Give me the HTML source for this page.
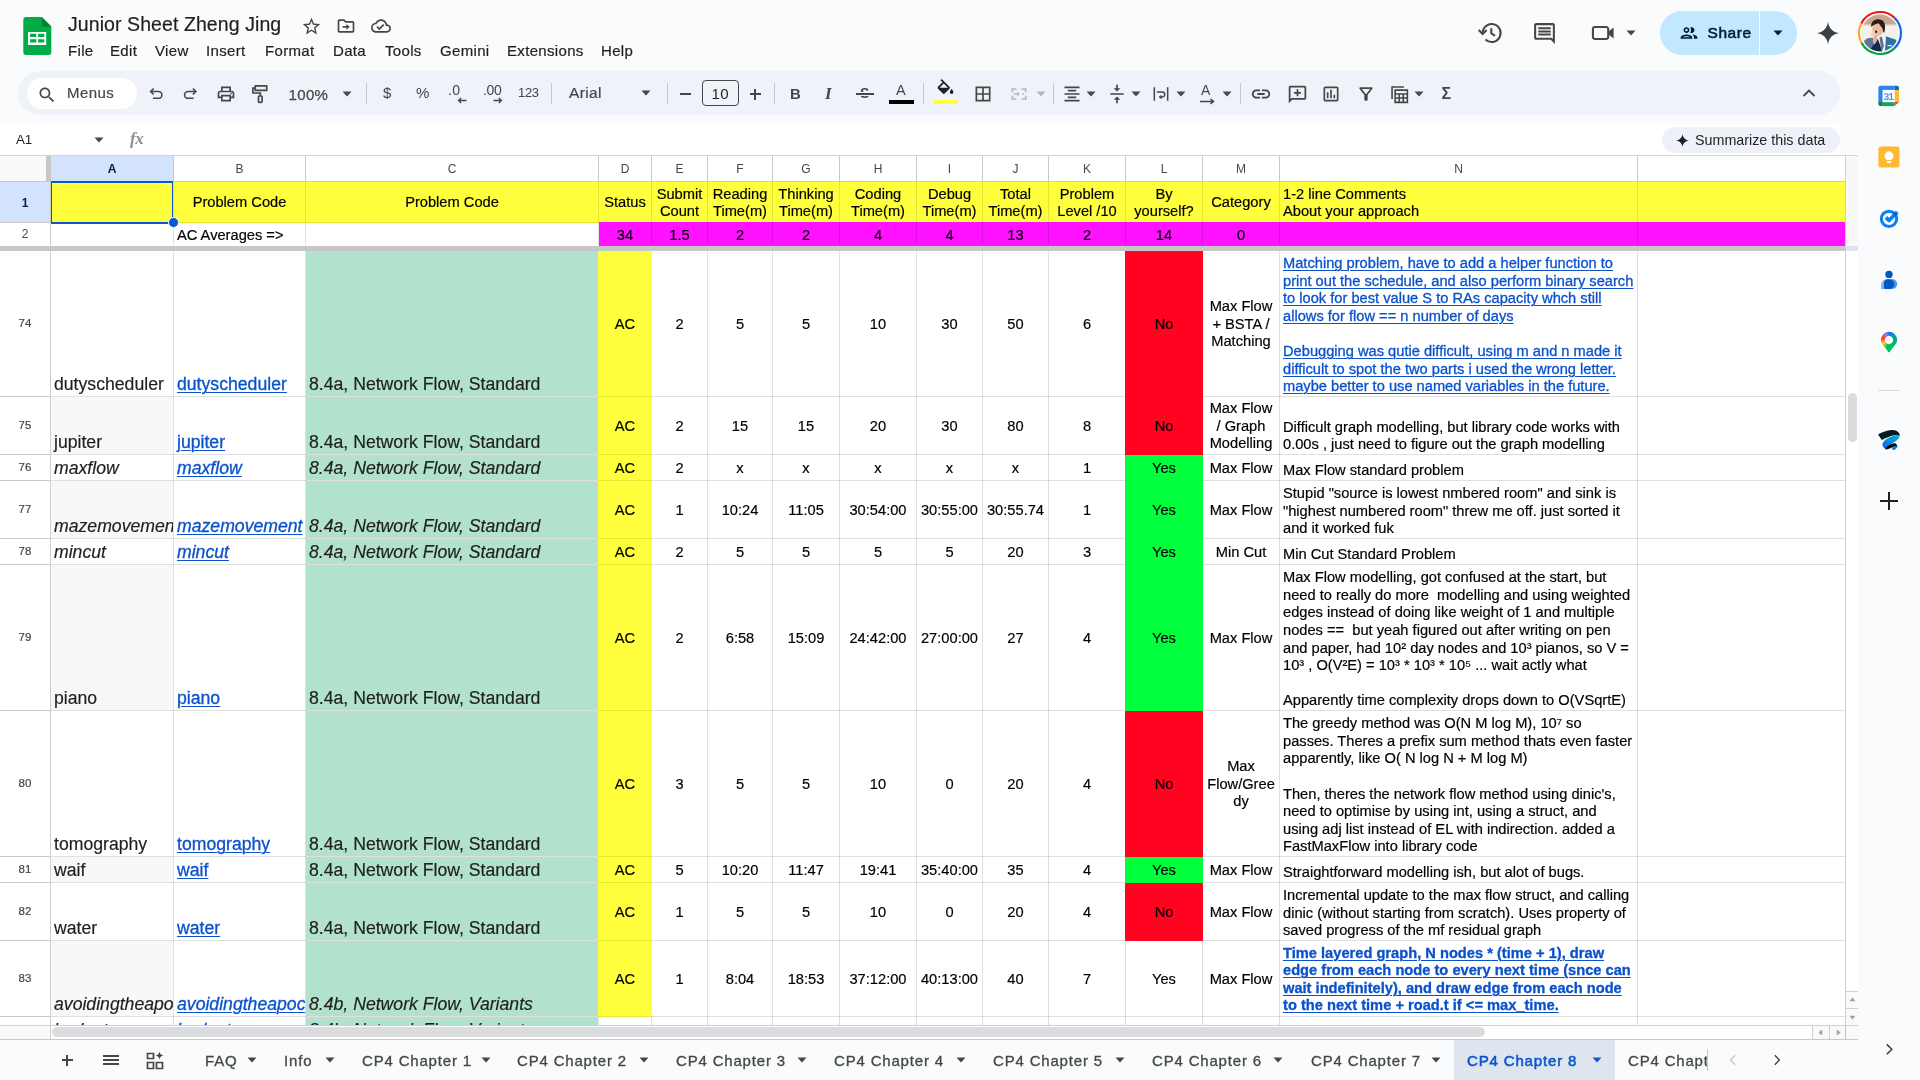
<!DOCTYPE html>
<html><head><meta charset="utf-8"><title>Junior Sheet Zheng Jing - Google Sheets</title>
<style>
*{box-sizing:border-box;margin:0;padding:0}
html,body{width:1920px;height:1080px;overflow:hidden;background:#f9fbfd;font-family:"Liberation Sans",sans-serif;color:#1f1f1f}
.abs,#grid div,#top div,#top svg,#side div,#side svg,#bot div,#bot svg{position:absolute}
#grid{position:absolute;left:0;top:0;width:1858px;height:1040px;overflow:hidden}
#gridbg{left:0;top:155px;width:1846px;height:869px;background:#fff}
.rh{left:0;width:50px;text-align:center;font-size:11.5px;padding-top:1px;-webkit-text-stroke:.2px #444746;color:#444746;background:#fff}
.c{overflow:hidden;background:#fff;color:#000}
.c .t{position:absolute;left:0;right:0;white-space:nowrap}
.bt .t{bottom:2px;left:3px;font-size:17.65px;line-height:20px;color:#1f1f1f}
.it .t{font-style:italic}
.lk a,.cm a{color:#0a52cc;-webkit-text-stroke:.3px #0a52cc;text-decoration:underline;text-decoration-thickness:1.250px;text-underline-offset:1.500px}
.c .t,.h1 span,.h2 span{-webkit-text-stroke:.18px currentColor}
#grid,#frozen,#top,#side,#bot{will-change:transform}
.mid{display:flex;align-items:center;justify-content:center}
.mid .t{position:static!important;text-align:center;font-size:14.67px;line-height:17.5px;padding-top:2px}
.cm .t{bottom:0px;left:3px;font-size:14.67px;line-height:17.6px;white-space:nowrap}
.cm a.b{font-weight:bold}
.cm.r83 .t{bottom:1px}
.c.x{z-index:2}
.hl{left:0;width:1846px;height:1px;background:rgba(0,0,0,.12)}
.vl{width:1px;background:rgba(0,0,0,.12)}
sup{font-size:9px}

.fz{position:absolute}
.ch{text-align:center;font-size:12px;line-height:27px;color:#444746;background:#fff}
.ch.sel{background:#d3e3fd;color:#041e49;font-weight:bold}
.rh2{text-align:center;font-size:12px;color:#444746;background:#fff}
.rh2.sel{background:#d3e3fd;color:#041e49;font-weight:bold}
.h1{display:flex;align-items:center;font-size:14.67px;line-height:17px;color:#000}
.h2{display:flex;align-items:center;font-size:14.67px;line-height:17px;color:#000;padding-top:2px}

.tx{position:absolute;white-space:nowrap}

.tab{position:absolute;white-space:nowrap;font-size:15px;line-height:24px;color:#444746;letter-spacing:.82px;-webkit-text-stroke:.3px #444746}
.tab.act{color:#0b57d0;font-weight:normal;-webkit-text-stroke:.55px #0b57d0;letter-spacing:.85px}
</style></head><body>
<div id="gridbg" class="abs"></div>
<!-- GRID -->
<div id="grid">
<div class="rh" style="top:251px;height:145px;line-height:143px">74</div>
<div class="c bt big" style="left:51px;top:251px;width:122px;height:145px;"><div class="t">dutyscheduler</div></div>
<div class="c bt big lk" style="left:174px;top:251px;width:131px;height:145px;"><div class="t"><a>dutyscheduler</a></div></div>
<div class="c bt big" style="left:306px;top:251px;width:292px;height:145px;background:#b2e1cd;"><div class="t">8.4a, Network Flow, Standard</div></div>
<div class="c x mid" style="left:598px;top:251px;width:54px;height:146px;background:#ffff3d;"><div class="t">AC</div></div>
<div class="c mid" style="left:652px;top:251px;width:55px;height:145px;"><div class="t">2</div></div>
<div class="c mid" style="left:708px;top:251px;width:64px;height:145px;"><div class="t">5</div></div>
<div class="c mid" style="left:773px;top:251px;width:66px;height:145px;"><div class="t">5</div></div>
<div class="c mid" style="left:840px;top:251px;width:76px;height:145px;"><div class="t">10</div></div>
<div class="c mid" style="left:917px;top:251px;width:65px;height:145px;"><div class="t">30</div></div>
<div class="c mid" style="left:983px;top:251px;width:65px;height:145px;"><div class="t">50</div></div>
<div class="c mid" style="left:1049px;top:251px;width:76px;height:145px;"><div class="t">6</div></div>
<div class="c x mid" style="left:1125px;top:251px;width:78px;height:146px;background:#ff0320;"><div class="t">No</div></div>
<div class="c mid" style="left:1203px;top:251px;width:76px;height:145px;"><div class="t">Max Flow<br>+ BSTA /<br>Matching</div></div>
<div class="c cm" style="left:1280px;top:251px;width:357px;height:145px;"><div class="t"><a>Matching problem, have to add a helper function to<br>print out the schedule, and also perform binary search<br>to look for best value S to RAs capacity whch still<br>allows for flow == n number of days</a><br><br><a>Debugging was qutie difficult, using m and n made it<br>difficult to spot the two parts i used the wrong letter.<br>maybe better to use named variables in the future.</a></div></div>
<div class="c mid" style="left:1638px;top:251px;width:207px;height:145px;"><div class="t"></div></div>
<div class="hl" style="top:396px"></div>
<div class="hl" style="top:396px;width:50px;background:rgba(0,0,0,.1)"></div>
<div class="hl" style="top:396px;left:598px;width:54px;z-index:3;background:rgba(0,0,0,.09)"></div>
<div class="rh" style="top:397px;height:57px;line-height:55px">75</div>
<div class="c bt big" style="left:51px;top:397px;width:122px;height:57px;background:#f8f8f8;"><div class="t">jupiter</div></div>
<div class="c bt big lk" style="left:174px;top:397px;width:131px;height:57px;"><div class="t"><a>jupiter</a></div></div>
<div class="c bt big" style="left:306px;top:397px;width:292px;height:57px;background:#b2e1cd;"><div class="t">8.4a, Network Flow, Standard</div></div>
<div class="c x mid" style="left:598px;top:397px;width:54px;height:58px;background:#ffff3d;"><div class="t">AC</div></div>
<div class="c mid" style="left:652px;top:397px;width:55px;height:57px;"><div class="t">2</div></div>
<div class="c mid" style="left:708px;top:397px;width:64px;height:57px;"><div class="t">15</div></div>
<div class="c mid" style="left:773px;top:397px;width:66px;height:57px;"><div class="t">15</div></div>
<div class="c mid" style="left:840px;top:397px;width:76px;height:57px;"><div class="t">20</div></div>
<div class="c mid" style="left:917px;top:397px;width:65px;height:57px;"><div class="t">30</div></div>
<div class="c mid" style="left:983px;top:397px;width:65px;height:57px;"><div class="t">80</div></div>
<div class="c mid" style="left:1049px;top:397px;width:76px;height:57px;"><div class="t">8</div></div>
<div class="c x mid" style="left:1125px;top:397px;width:78px;height:58px;background:#ff0320;"><div class="t">No</div></div>
<div class="c mid" style="left:1203px;top:397px;width:76px;height:57px;"><div class="t">Max Flow<br>/ Graph<br>Modelling</div></div>
<div class="c cm" style="left:1280px;top:397px;width:357px;height:57px;"><div class="t">Difficult graph modelling, but library code works with<br>0.00s , just need to figure out the graph modelling</div></div>
<div class="c mid" style="left:1638px;top:397px;width:207px;height:57px;"><div class="t"></div></div>
<div class="hl" style="top:454px"></div>
<div class="hl" style="top:454px;width:50px;background:rgba(0,0,0,.1)"></div>
<div class="hl" style="top:454px;left:598px;width:54px;z-index:3;background:rgba(0,0,0,.09)"></div>
<div class="rh" style="top:455px;height:25px;line-height:23px">76</div>
<div class="c bt big it" style="left:51px;top:455px;width:122px;height:25px;"><div class="t">maxflow</div></div>
<div class="c bt big lk it" style="left:174px;top:455px;width:131px;height:25px;"><div class="t"><a>maxflow</a></div></div>
<div class="c bt big it" style="left:306px;top:455px;width:292px;height:25px;background:#b2e1cd;"><div class="t">8.4a, Network Flow, Standard</div></div>
<div class="c x mid" style="left:598px;top:455px;width:54px;height:26px;background:#ffff3d;"><div class="t">AC</div></div>
<div class="c mid" style="left:652px;top:455px;width:55px;height:25px;"><div class="t">2</div></div>
<div class="c mid" style="left:708px;top:455px;width:64px;height:25px;"><div class="t">x</div></div>
<div class="c mid" style="left:773px;top:455px;width:66px;height:25px;"><div class="t">x</div></div>
<div class="c mid" style="left:840px;top:455px;width:76px;height:25px;"><div class="t">x</div></div>
<div class="c mid" style="left:917px;top:455px;width:65px;height:25px;"><div class="t">x</div></div>
<div class="c mid" style="left:983px;top:455px;width:65px;height:25px;"><div class="t">x</div></div>
<div class="c mid" style="left:1049px;top:455px;width:76px;height:25px;"><div class="t">1</div></div>
<div class="c x mid" style="left:1125px;top:455px;width:78px;height:26px;background:#00ff3c;"><div class="t">Yes</div></div>
<div class="c mid" style="left:1203px;top:455px;width:76px;height:25px;"><div class="t">Max Flow</div></div>
<div class="c cm" style="left:1280px;top:455px;width:357px;height:25px;"><div class="t">Max Flow standard problem</div></div>
<div class="c mid" style="left:1638px;top:455px;width:207px;height:25px;"><div class="t"></div></div>
<div class="hl" style="top:480px"></div>
<div class="hl" style="top:480px;width:50px;background:rgba(0,0,0,.1)"></div>
<div class="hl" style="top:480px;left:598px;width:54px;z-index:3;background:rgba(0,0,0,.09)"></div>
<div class="rh" style="top:481px;height:57px;line-height:55px">77</div>
<div class="c bt big it" style="left:51px;top:481px;width:122px;height:57px;background:#f8f8f8;"><div class="t">mazemovement</div></div>
<div class="c bt big lk it" style="left:174px;top:481px;width:131px;height:57px;"><div class="t"><a>mazemovement</a></div></div>
<div class="c bt big it" style="left:306px;top:481px;width:292px;height:57px;background:#b2e1cd;"><div class="t">8.4a, Network Flow, Standard</div></div>
<div class="c x mid" style="left:598px;top:481px;width:54px;height:58px;background:#ffff3d;"><div class="t">AC</div></div>
<div class="c mid" style="left:652px;top:481px;width:55px;height:57px;"><div class="t">1</div></div>
<div class="c mid" style="left:708px;top:481px;width:64px;height:57px;"><div class="t">10:24</div></div>
<div class="c mid" style="left:773px;top:481px;width:66px;height:57px;"><div class="t">11:05</div></div>
<div class="c mid" style="left:840px;top:481px;width:76px;height:57px;"><div class="t">30:54:00</div></div>
<div class="c mid" style="left:917px;top:481px;width:65px;height:57px;"><div class="t">30:55:00</div></div>
<div class="c mid" style="left:983px;top:481px;width:65px;height:57px;"><div class="t">30:55.74</div></div>
<div class="c mid" style="left:1049px;top:481px;width:76px;height:57px;"><div class="t">1</div></div>
<div class="c x mid" style="left:1125px;top:481px;width:78px;height:58px;background:#00ff3c;"><div class="t">Yes</div></div>
<div class="c mid" style="left:1203px;top:481px;width:76px;height:57px;"><div class="t">Max Flow</div></div>
<div class="c cm" style="left:1280px;top:481px;width:357px;height:57px;"><div class="t">Stupid "source is lowest nmbered room" and sink is<br>"highest numbered room" threw me off. just sorted it<br>and it worked fuk</div></div>
<div class="c mid" style="left:1638px;top:481px;width:207px;height:57px;"><div class="t"></div></div>
<div class="hl" style="top:538px"></div>
<div class="hl" style="top:538px;width:50px;background:rgba(0,0,0,.1)"></div>
<div class="hl" style="top:538px;left:598px;width:54px;z-index:3;background:rgba(0,0,0,.09)"></div>
<div class="rh" style="top:539px;height:25px;line-height:23px">78</div>
<div class="c bt big it" style="left:51px;top:539px;width:122px;height:25px;"><div class="t">mincut</div></div>
<div class="c bt big lk it" style="left:174px;top:539px;width:131px;height:25px;"><div class="t"><a>mincut</a></div></div>
<div class="c bt big it" style="left:306px;top:539px;width:292px;height:25px;background:#b2e1cd;"><div class="t">8.4a, Network Flow, Standard</div></div>
<div class="c x mid" style="left:598px;top:539px;width:54px;height:26px;background:#ffff3d;"><div class="t">AC</div></div>
<div class="c mid" style="left:652px;top:539px;width:55px;height:25px;"><div class="t">2</div></div>
<div class="c mid" style="left:708px;top:539px;width:64px;height:25px;"><div class="t">5</div></div>
<div class="c mid" style="left:773px;top:539px;width:66px;height:25px;"><div class="t">5</div></div>
<div class="c mid" style="left:840px;top:539px;width:76px;height:25px;"><div class="t">5</div></div>
<div class="c mid" style="left:917px;top:539px;width:65px;height:25px;"><div class="t">5</div></div>
<div class="c mid" style="left:983px;top:539px;width:65px;height:25px;"><div class="t">20</div></div>
<div class="c mid" style="left:1049px;top:539px;width:76px;height:25px;"><div class="t">3</div></div>
<div class="c x mid" style="left:1125px;top:539px;width:78px;height:26px;background:#00ff3c;"><div class="t">Yes</div></div>
<div class="c mid" style="left:1203px;top:539px;width:76px;height:25px;"><div class="t">Min Cut</div></div>
<div class="c cm" style="left:1280px;top:539px;width:357px;height:25px;"><div class="t">Min Cut Standard Problem</div></div>
<div class="c mid" style="left:1638px;top:539px;width:207px;height:25px;"><div class="t"></div></div>
<div class="hl" style="top:564px"></div>
<div class="hl" style="top:564px;width:50px;background:rgba(0,0,0,.1)"></div>
<div class="hl" style="top:564px;left:598px;width:54px;z-index:3;background:rgba(0,0,0,.09)"></div>
<div class="rh" style="top:565px;height:145px;line-height:143px">79</div>
<div class="c bt big" style="left:51px;top:565px;width:122px;height:145px;background:#f8f8f8;"><div class="t">piano</div></div>
<div class="c bt big lk" style="left:174px;top:565px;width:131px;height:145px;"><div class="t"><a>piano</a></div></div>
<div class="c bt big" style="left:306px;top:565px;width:292px;height:145px;background:#b2e1cd;"><div class="t">8.4a, Network Flow, Standard</div></div>
<div class="c x mid" style="left:598px;top:565px;width:54px;height:146px;background:#ffff3d;"><div class="t">AC</div></div>
<div class="c mid" style="left:652px;top:565px;width:55px;height:145px;"><div class="t">2</div></div>
<div class="c mid" style="left:708px;top:565px;width:64px;height:145px;"><div class="t">6:58</div></div>
<div class="c mid" style="left:773px;top:565px;width:66px;height:145px;"><div class="t">15:09</div></div>
<div class="c mid" style="left:840px;top:565px;width:76px;height:145px;"><div class="t">24:42:00</div></div>
<div class="c mid" style="left:917px;top:565px;width:65px;height:145px;"><div class="t">27:00:00</div></div>
<div class="c mid" style="left:983px;top:565px;width:65px;height:145px;"><div class="t">27</div></div>
<div class="c mid" style="left:1049px;top:565px;width:76px;height:145px;"><div class="t">4</div></div>
<div class="c x mid" style="left:1125px;top:565px;width:78px;height:146px;background:#00ff3c;"><div class="t">Yes</div></div>
<div class="c mid" style="left:1203px;top:565px;width:76px;height:145px;"><div class="t">Max Flow</div></div>
<div class="c cm" style="left:1280px;top:565px;width:357px;height:145px;"><div class="t">Max Flow modelling, got confused at the start, but<br>need to really do more&nbsp; modelling and using weighted<br>edges instead of doing like weight of 1 and multiple<br>nodes ==&nbsp; but yeah figured out after writing on pen<br>and paper, had 10² day nodes and 10³ pianos, so V =<br>10³ , O(V²E) = 10³ * 10³ * 10⁵ ... wait actly what<br><br>Apparently time complexity drops down to O(VSqrtE)</div></div>
<div class="c mid" style="left:1638px;top:565px;width:207px;height:145px;"><div class="t"></div></div>
<div class="hl" style="top:710px"></div>
<div class="hl" style="top:710px;width:50px;background:rgba(0,0,0,.1)"></div>
<div class="hl" style="top:710px;left:598px;width:54px;z-index:3;background:rgba(0,0,0,.09)"></div>
<div class="rh" style="top:711px;height:145px;line-height:143px">80</div>
<div class="c bt big" style="left:51px;top:711px;width:122px;height:145px;"><div class="t">tomography</div></div>
<div class="c bt big lk" style="left:174px;top:711px;width:131px;height:145px;"><div class="t"><a>tomography</a></div></div>
<div class="c bt big" style="left:306px;top:711px;width:292px;height:145px;background:#b2e1cd;"><div class="t">8.4a, Network Flow, Standard</div></div>
<div class="c x mid" style="left:598px;top:711px;width:54px;height:146px;background:#ffff3d;"><div class="t">AC</div></div>
<div class="c mid" style="left:652px;top:711px;width:55px;height:145px;"><div class="t">3</div></div>
<div class="c mid" style="left:708px;top:711px;width:64px;height:145px;"><div class="t">5</div></div>
<div class="c mid" style="left:773px;top:711px;width:66px;height:145px;"><div class="t">5</div></div>
<div class="c mid" style="left:840px;top:711px;width:76px;height:145px;"><div class="t">10</div></div>
<div class="c mid" style="left:917px;top:711px;width:65px;height:145px;"><div class="t">0</div></div>
<div class="c mid" style="left:983px;top:711px;width:65px;height:145px;"><div class="t">20</div></div>
<div class="c mid" style="left:1049px;top:711px;width:76px;height:145px;"><div class="t">4</div></div>
<div class="c x mid" style="left:1125px;top:711px;width:78px;height:146px;background:#ff0320;"><div class="t">No</div></div>
<div class="c mid" style="left:1203px;top:711px;width:76px;height:145px;"><div class="t">Max<br>Flow/Gree<br>dy</div></div>
<div class="c cm" style="left:1280px;top:711px;width:357px;height:145px;"><div class="t">The greedy method was O(N M log M), 10⁷ so<br>passes. Theres a prefix sum method thats even faster<br>apparently, like O( N log N + M log M)<br><br>Then, theres the network flow method using dinic's,<br>need to optimise by using int, using a struct, and<br>using adj list instead of EL with indirection. added a<br>FastMaxFlow into library code</div></div>
<div class="c mid" style="left:1638px;top:711px;width:207px;height:145px;"><div class="t"></div></div>
<div class="hl" style="top:856px"></div>
<div class="hl" style="top:856px;width:50px;background:rgba(0,0,0,.1)"></div>
<div class="hl" style="top:856px;left:598px;width:54px;z-index:3;background:rgba(0,0,0,.09)"></div>
<div class="rh" style="top:857px;height:25px;line-height:23px">81</div>
<div class="c bt big" style="left:51px;top:857px;width:122px;height:25px;background:#f8f8f8;"><div class="t">waif</div></div>
<div class="c bt big lk" style="left:174px;top:857px;width:131px;height:25px;"><div class="t"><a>waif</a></div></div>
<div class="c bt big" style="left:306px;top:857px;width:292px;height:25px;background:#b2e1cd;"><div class="t">8.4a, Network Flow, Standard</div></div>
<div class="c x mid" style="left:598px;top:857px;width:54px;height:26px;background:#ffff3d;"><div class="t">AC</div></div>
<div class="c mid" style="left:652px;top:857px;width:55px;height:25px;"><div class="t">5</div></div>
<div class="c mid" style="left:708px;top:857px;width:64px;height:25px;"><div class="t">10:20</div></div>
<div class="c mid" style="left:773px;top:857px;width:66px;height:25px;"><div class="t">11:47</div></div>
<div class="c mid" style="left:840px;top:857px;width:76px;height:25px;"><div class="t">19:41</div></div>
<div class="c mid" style="left:917px;top:857px;width:65px;height:25px;"><div class="t">35:40:00</div></div>
<div class="c mid" style="left:983px;top:857px;width:65px;height:25px;"><div class="t">35</div></div>
<div class="c mid" style="left:1049px;top:857px;width:76px;height:25px;"><div class="t">4</div></div>
<div class="c x mid" style="left:1125px;top:857px;width:78px;height:26px;background:#00ff3c;"><div class="t">Yes</div></div>
<div class="c mid" style="left:1203px;top:857px;width:76px;height:25px;"><div class="t">Max Flow</div></div>
<div class="c cm" style="left:1280px;top:857px;width:357px;height:25px;"><div class="t">Straightforward modelling ish, but alot of bugs.</div></div>
<div class="c mid" style="left:1638px;top:857px;width:207px;height:25px;"><div class="t"></div></div>
<div class="hl" style="top:882px"></div>
<div class="hl" style="top:882px;width:50px;background:rgba(0,0,0,.1)"></div>
<div class="hl" style="top:882px;left:598px;width:54px;z-index:3;background:rgba(0,0,0,.09)"></div>
<div class="rh" style="top:883px;height:57px;line-height:55px">82</div>
<div class="c bt big" style="left:51px;top:883px;width:122px;height:57px;"><div class="t">water</div></div>
<div class="c bt big lk" style="left:174px;top:883px;width:131px;height:57px;"><div class="t"><a>water</a></div></div>
<div class="c bt big" style="left:306px;top:883px;width:292px;height:57px;background:#b2e1cd;"><div class="t">8.4a, Network Flow, Standard</div></div>
<div class="c x mid" style="left:598px;top:883px;width:54px;height:58px;background:#ffff3d;"><div class="t">AC</div></div>
<div class="c mid" style="left:652px;top:883px;width:55px;height:57px;"><div class="t">1</div></div>
<div class="c mid" style="left:708px;top:883px;width:64px;height:57px;"><div class="t">5</div></div>
<div class="c mid" style="left:773px;top:883px;width:66px;height:57px;"><div class="t">5</div></div>
<div class="c mid" style="left:840px;top:883px;width:76px;height:57px;"><div class="t">10</div></div>
<div class="c mid" style="left:917px;top:883px;width:65px;height:57px;"><div class="t">0</div></div>
<div class="c mid" style="left:983px;top:883px;width:65px;height:57px;"><div class="t">20</div></div>
<div class="c mid" style="left:1049px;top:883px;width:76px;height:57px;"><div class="t">4</div></div>
<div class="c x mid" style="left:1125px;top:883px;width:78px;height:58px;background:#ff0320;"><div class="t">No</div></div>
<div class="c mid" style="left:1203px;top:883px;width:76px;height:57px;"><div class="t">Max Flow</div></div>
<div class="c cm" style="left:1280px;top:883px;width:357px;height:57px;"><div class="t">Incremental update to the max flow struct, and calling<br>dinic (without starting from scratch). Uses property of<br>saved progress of the mf residual graph</div></div>
<div class="c mid" style="left:1638px;top:883px;width:207px;height:57px;"><div class="t"></div></div>
<div class="hl" style="top:940px"></div>
<div class="hl" style="top:940px;width:50px;background:rgba(0,0,0,.1)"></div>
<div class="hl" style="top:940px;left:598px;width:54px;z-index:3;background:rgba(0,0,0,.09)"></div>
<div class="rh" style="top:941px;height:75px;line-height:73px">83</div>
<div class="c bt big it" style="left:51px;top:941px;width:122px;height:75px;background:#f8f8f8;"><div class="t">avoidingtheapocalypse</div></div>
<div class="c bt big lk it" style="left:174px;top:941px;width:131px;height:75px;"><div class="t"><a>avoidingtheapocalypse</a></div></div>
<div class="c bt big it" style="left:306px;top:941px;width:292px;height:75px;background:#b2e1cd;"><div class="t">8.4b, Network Flow, Variants</div></div>
<div class="c x mid" style="left:598px;top:941px;width:54px;height:76px;background:#ffff3d;"><div class="t">AC</div></div>
<div class="c mid" style="left:652px;top:941px;width:55px;height:75px;"><div class="t">1</div></div>
<div class="c mid" style="left:708px;top:941px;width:64px;height:75px;"><div class="t">8:04</div></div>
<div class="c mid" style="left:773px;top:941px;width:66px;height:75px;"><div class="t">18:53</div></div>
<div class="c mid" style="left:840px;top:941px;width:76px;height:75px;"><div class="t">37:12:00</div></div>
<div class="c mid" style="left:917px;top:941px;width:65px;height:75px;"><div class="t">40:13:00</div></div>
<div class="c mid" style="left:983px;top:941px;width:65px;height:75px;"><div class="t">40</div></div>
<div class="c mid" style="left:1049px;top:941px;width:76px;height:75px;"><div class="t">7</div></div>
<div class="c mid" style="left:1126px;top:941px;width:76px;height:75px;"><div class="t">Yes</div></div>
<div class="c mid" style="left:1203px;top:941px;width:76px;height:75px;"><div class="t">Max Flow</div></div>
<div class="c cm r83" style="left:1280px;top:941px;width:357px;height:75px;"><div class="t"><a class="b">Time layered graph, N nodes * (time + 1), draw<br>edge from each node to every next time (snce can<br>wait indefinitely), and draw edge from each node<br>to the next time + road.t if &lt;= max_time.</a></div></div>
<div class="c mid" style="left:1638px;top:941px;width:207px;height:75px;"><div class="t"></div></div>
<div class="hl" style="top:1016px"></div>
<div class="hl" style="top:1016px;width:50px;background:rgba(0,0,0,.1)"></div>
<div class="hl" style="top:1016px;left:598px;width:54px;z-index:3;background:rgba(0,0,0,.09)"></div>
<div class="rh" style="top:1017px;height:25px;line-height:23px">84</div>
<div class="c bt big it" style="left:51px;top:1017px;width:122px;height:25px;"><div class="t">budget</div></div>
<div class="c bt big lk it" style="left:174px;top:1017px;width:131px;height:25px;"><div class="t"><a>budget</a></div></div>
<div class="c bt big it" style="left:306px;top:1017px;width:292px;height:25px;background:#b2e1cd;"><div class="t">8.4b, Network Flow, Variants</div></div>
<div class="c mid" style="left:599px;top:1017px;width:52px;height:25px;"><div class="t"></div></div>
<div class="c mid" style="left:652px;top:1017px;width:55px;height:25px;"><div class="t"></div></div>
<div class="c mid" style="left:708px;top:1017px;width:64px;height:25px;"><div class="t"></div></div>
<div class="c mid" style="left:773px;top:1017px;width:66px;height:25px;"><div class="t"></div></div>
<div class="c mid" style="left:840px;top:1017px;width:76px;height:25px;"><div class="t"></div></div>
<div class="c mid" style="left:917px;top:1017px;width:65px;height:25px;"><div class="t"></div></div>
<div class="c mid" style="left:983px;top:1017px;width:65px;height:25px;"><div class="t"></div></div>
<div class="c mid" style="left:1049px;top:1017px;width:76px;height:25px;"><div class="t"></div></div>
<div class="c mid" style="left:1126px;top:1017px;width:76px;height:25px;"><div class="t"></div></div>
<div class="c mid" style="left:1203px;top:1017px;width:76px;height:25px;"><div class="t"></div></div>
<div class="c cm" style="left:1280px;top:1017px;width:357px;height:25px;"><div class="t"></div></div>
<div class="c mid" style="left:1638px;top:1017px;width:207px;height:25px;"><div class="t"></div></div>
<div class="hl" style="top:1042px"></div>
<div class="hl" style="top:1042px;width:50px;background:rgba(0,0,0,.1)"></div>
<div class="vl" style="left:50px;top:251px;height:780px;background:#cfcfcf"></div>
<div class="vl" style="left:173px;top:251px;height:780px"></div>
<div class="vl" style="left:305px;top:251px;height:780px"></div>
<div class="vl" style="left:598px;top:251px;height:780px"></div>
<div class="vl" style="left:651px;top:251px;height:780px"></div>
<div class="vl" style="left:707px;top:251px;height:780px"></div>
<div class="vl" style="left:772px;top:251px;height:780px"></div>
<div class="vl" style="left:839px;top:251px;height:780px"></div>
<div class="vl" style="left:916px;top:251px;height:780px"></div>
<div class="vl" style="left:982px;top:251px;height:780px"></div>
<div class="vl" style="left:1048px;top:251px;height:780px"></div>
<div class="vl" style="left:1125px;top:251px;height:780px"></div>
<div class="vl" style="left:1202px;top:251px;height:780px"></div>
<div class="vl" style="left:1279px;top:251px;height:780px"></div>
<div class="vl" style="left:1637px;top:251px;height:780px"></div>
<div class="vl" style="left:1845px;top:251px;height:780px"></div>
</div><!-- FROZEN HEADER -->
<div id="frozen" class="abs" style="left:0;top:155px;width:1846px;height:96px">
<div class="fz" style="left:0;top:0;width:1846px;height:96px;background:#fff"></div>
<div class="fz" style="left:0;top:0;width:1846px;height:1px;background:#d5d5d5"></div>
<div class="fz" style="left:0;top:1px;width:46px;height:25px;background:#f8f9fa"></div>
<div class="fz ch sel" style="left:51px;top:1px;width:122px;height:25px">A</div>
<div class="fz" style="left:173px;top:1px;width:1px;height:25px;background:#c9c9c9"></div>
<div class="fz ch" style="left:174px;top:1px;width:131px;height:25px">B</div>
<div class="fz" style="left:305px;top:1px;width:1px;height:25px;background:#c9c9c9"></div>
<div class="fz ch" style="left:306px;top:1px;width:292px;height:25px">C</div>
<div class="fz" style="left:598px;top:1px;width:1px;height:25px;background:#c9c9c9"></div>
<div class="fz ch" style="left:599px;top:1px;width:52px;height:25px">D</div>
<div class="fz" style="left:651px;top:1px;width:1px;height:25px;background:#c9c9c9"></div>
<div class="fz ch" style="left:652px;top:1px;width:55px;height:25px">E</div>
<div class="fz" style="left:707px;top:1px;width:1px;height:25px;background:#c9c9c9"></div>
<div class="fz ch" style="left:708px;top:1px;width:64px;height:25px">F</div>
<div class="fz" style="left:772px;top:1px;width:1px;height:25px;background:#c9c9c9"></div>
<div class="fz ch" style="left:773px;top:1px;width:66px;height:25px">G</div>
<div class="fz" style="left:839px;top:1px;width:1px;height:25px;background:#c9c9c9"></div>
<div class="fz ch" style="left:840px;top:1px;width:76px;height:25px">H</div>
<div class="fz" style="left:916px;top:1px;width:1px;height:25px;background:#c9c9c9"></div>
<div class="fz ch" style="left:917px;top:1px;width:65px;height:25px">I</div>
<div class="fz" style="left:982px;top:1px;width:1px;height:25px;background:#c9c9c9"></div>
<div class="fz ch" style="left:983px;top:1px;width:65px;height:25px">J</div>
<div class="fz" style="left:1048px;top:1px;width:1px;height:25px;background:#c9c9c9"></div>
<div class="fz ch" style="left:1049px;top:1px;width:76px;height:25px">K</div>
<div class="fz" style="left:1125px;top:1px;width:1px;height:25px;background:#c9c9c9"></div>
<div class="fz ch" style="left:1126px;top:1px;width:76px;height:25px">L</div>
<div class="fz" style="left:1202px;top:1px;width:1px;height:25px;background:#c9c9c9"></div>
<div class="fz ch" style="left:1203px;top:1px;width:76px;height:25px">M</div>
<div class="fz" style="left:1279px;top:1px;width:1px;height:25px;background:#c9c9c9"></div>
<div class="fz ch" style="left:1280px;top:1px;width:357px;height:25px">N</div>
<div class="fz" style="left:1637px;top:1px;width:1px;height:25px;background:#c9c9c9"></div>
<div class="fz ch" style="left:1638px;top:1px;width:207px;height:25px"></div>
<div class="fz" style="left:1845px;top:1px;width:1px;height:25px;background:#c9c9c9"></div>
<div class="fz" style="left:0;top:26px;width:1846px;height:1px;background:#c9c9c9"></div>
<div class="fz rh2 sel" style="left:0;top:27px;width:50px;height:41px;line-height:43px">1</div>
<div class="fz" style="left:0;top:67px;width:50px;height:1px;background:#c9c9c9"></div>
<div class="fz rh2" style="left:0;top:68px;width:50px;height:22px;line-height:22px">2</div>
<div class="fz" style="left:50px;top:27px;width:1px;height:63px;background:#c9c9c9"></div>
<div class="fz h1" style="left:51px;top:27px;width:123px;height:41px;background:#ffff3d;justify-content:center;text-align:center;padding-right:1px;"><span></span></div>
<div class="fz" style="left:173px;top:27px;width:1px;height:40px;background:rgba(0,0,0,.1)"></div>
<div class="fz h1" style="left:174px;top:27px;width:132px;height:41px;background:#ffff3d;justify-content:center;text-align:center;padding-right:1px;"><span>Problem Code</span></div>
<div class="fz" style="left:305px;top:27px;width:1px;height:40px;background:rgba(0,0,0,.1)"></div>
<div class="fz h1" style="left:306px;top:27px;width:293px;height:41px;background:#ffff3d;justify-content:center;text-align:center;padding-right:1px;"><span>Problem Code</span></div>
<div class="fz" style="left:598px;top:27px;width:1px;height:40px;background:rgba(0,0,0,.1)"></div>
<div class="fz h1" style="left:599px;top:27px;width:53px;height:41px;background:#ffff3d;justify-content:center;text-align:center;padding-right:1px;"><span>Status</span></div>
<div class="fz" style="left:651px;top:27px;width:1px;height:40px;background:rgba(0,0,0,.1)"></div>
<div class="fz h1" style="left:652px;top:27px;width:56px;height:41px;background:#ffff3d;justify-content:center;text-align:center;padding-right:1px;"><span>Submit<br>Count</span></div>
<div class="fz" style="left:707px;top:27px;width:1px;height:40px;background:rgba(0,0,0,.1)"></div>
<div class="fz h1" style="left:708px;top:27px;width:65px;height:41px;background:#ffff3d;justify-content:center;text-align:center;padding-right:1px;"><span>Reading<br>Time(m)</span></div>
<div class="fz" style="left:772px;top:27px;width:1px;height:40px;background:rgba(0,0,0,.1)"></div>
<div class="fz h1" style="left:773px;top:27px;width:67px;height:41px;background:#ffff3d;justify-content:center;text-align:center;padding-right:1px;"><span>Thinking<br>Time(m)</span></div>
<div class="fz" style="left:839px;top:27px;width:1px;height:40px;background:rgba(0,0,0,.1)"></div>
<div class="fz h1" style="left:840px;top:27px;width:77px;height:41px;background:#ffff3d;justify-content:center;text-align:center;padding-right:1px;"><span>Coding<br>Time(m)</span></div>
<div class="fz" style="left:916px;top:27px;width:1px;height:40px;background:rgba(0,0,0,.1)"></div>
<div class="fz h1" style="left:917px;top:27px;width:66px;height:41px;background:#ffff3d;justify-content:center;text-align:center;padding-right:1px;"><span>Debug<br>Time(m)</span></div>
<div class="fz" style="left:982px;top:27px;width:1px;height:40px;background:rgba(0,0,0,.1)"></div>
<div class="fz h1" style="left:983px;top:27px;width:66px;height:41px;background:#ffff3d;justify-content:center;text-align:center;padding-right:1px;"><span>Total<br>Time(m)</span></div>
<div class="fz" style="left:1048px;top:27px;width:1px;height:40px;background:rgba(0,0,0,.1)"></div>
<div class="fz h1" style="left:1049px;top:27px;width:77px;height:41px;background:#ffff3d;justify-content:center;text-align:center;padding-right:1px;"><span>Problem<br>Level /10</span></div>
<div class="fz" style="left:1125px;top:27px;width:1px;height:40px;background:rgba(0,0,0,.1)"></div>
<div class="fz h1" style="left:1126px;top:27px;width:77px;height:41px;background:#ffff3d;justify-content:center;text-align:center;padding-right:1px;"><span>By<br>yourself?</span></div>
<div class="fz" style="left:1202px;top:27px;width:1px;height:40px;background:rgba(0,0,0,.1)"></div>
<div class="fz h1" style="left:1203px;top:27px;width:77px;height:41px;background:#ffff3d;justify-content:center;text-align:center;padding-right:1px;"><span>Category</span></div>
<div class="fz" style="left:1279px;top:27px;width:1px;height:40px;background:rgba(0,0,0,.1)"></div>
<div class="fz h1" style="left:1280px;top:27px;width:358px;height:41px;background:#ffff3d;justify-content:flex-start;text-align:left;padding-right:1px;padding-left:3px;"><span>1-2 line Comments<br>About your approach</span></div>
<div class="fz" style="left:1637px;top:27px;width:1px;height:40px;background:rgba(0,0,0,.1)"></div>
<div class="fz h1" style="left:1638px;top:27px;width:208px;height:41px;background:#ffff3d;justify-content:center;text-align:center;padding-right:1px;"><span></span></div>
<div class="fz" style="left:51px;top:67px;width:548px;height:1px;background:rgba(0,0,0,.1)"></div>
<div class="fz h2" style="left:51px;top:68px;width:122px;height:22px;background:#fff;justify-content:center;padding-right:1px;"><span></span></div>
<div class="fz" style="left:173px;top:68px;width:1px;height:22px;background:rgba(0,0,0,.12)"></div>
<div class="fz h2" style="left:174px;top:68px;width:131px;height:22px;background:#fff;justify-content:flex-start;padding-right:1px;padding-left:3px;"><span>AC Averages =&gt;</span></div>
<div class="fz" style="left:305px;top:68px;width:1px;height:22px;background:rgba(0,0,0,.12)"></div>
<div class="fz h2" style="left:306px;top:68px;width:292px;height:22px;background:#fff;justify-content:center;padding-right:1px;"><span></span></div>
<div class="fz" style="left:598px;top:68px;width:1px;height:22px;background:rgba(0,0,0,.12)"></div>
<div class="fz h2" style="left:599px;top:67px;width:53px;height:24px;background:#ff12ff;justify-content:center;padding-right:1px;"><span>34</span></div>
<div class="fz" style="left:651px;top:68px;width:1px;height:22px;background:rgba(0,0,0,.12)"></div>
<div class="fz h2" style="left:652px;top:67px;width:56px;height:24px;background:#ff12ff;justify-content:center;padding-right:1px;"><span>1.5</span></div>
<div class="fz" style="left:707px;top:68px;width:1px;height:22px;background:rgba(0,0,0,.12)"></div>
<div class="fz h2" style="left:708px;top:67px;width:65px;height:24px;background:#ff12ff;justify-content:center;padding-right:1px;"><span>2</span></div>
<div class="fz" style="left:772px;top:68px;width:1px;height:22px;background:rgba(0,0,0,.12)"></div>
<div class="fz h2" style="left:773px;top:67px;width:67px;height:24px;background:#ff12ff;justify-content:center;padding-right:1px;"><span>2</span></div>
<div class="fz" style="left:839px;top:68px;width:1px;height:22px;background:rgba(0,0,0,.12)"></div>
<div class="fz h2" style="left:840px;top:67px;width:77px;height:24px;background:#ff12ff;justify-content:center;padding-right:1px;"><span>4</span></div>
<div class="fz" style="left:916px;top:68px;width:1px;height:22px;background:rgba(0,0,0,.12)"></div>
<div class="fz h2" style="left:917px;top:67px;width:66px;height:24px;background:#ff12ff;justify-content:center;padding-right:1px;"><span>4</span></div>
<div class="fz" style="left:982px;top:68px;width:1px;height:22px;background:rgba(0,0,0,.12)"></div>
<div class="fz h2" style="left:983px;top:67px;width:66px;height:24px;background:#ff12ff;justify-content:center;padding-right:1px;"><span>13</span></div>
<div class="fz" style="left:1048px;top:68px;width:1px;height:22px;background:rgba(0,0,0,.12)"></div>
<div class="fz h2" style="left:1049px;top:67px;width:77px;height:24px;background:#ff12ff;justify-content:center;padding-right:1px;"><span>2</span></div>
<div class="fz" style="left:1125px;top:68px;width:1px;height:22px;background:rgba(0,0,0,.12)"></div>
<div class="fz h2" style="left:1126px;top:67px;width:77px;height:24px;background:#ff12ff;justify-content:center;padding-right:1px;"><span>14</span></div>
<div class="fz" style="left:1202px;top:68px;width:1px;height:22px;background:rgba(0,0,0,.12)"></div>
<div class="fz h2" style="left:1203px;top:67px;width:77px;height:24px;background:#ff12ff;justify-content:center;padding-right:1px;"><span>0</span></div>
<div class="fz" style="left:1279px;top:68px;width:1px;height:22px;background:rgba(0,0,0,.12)"></div>
<div class="fz h2" style="left:1280px;top:67px;width:358px;height:24px;background:#ff12ff;justify-content:center;padding-right:1px;"><span></span></div>
<div class="fz" style="left:1637px;top:68px;width:1px;height:22px;background:rgba(0,0,0,.12)"></div>
<div class="fz h2" style="left:1638px;top:67px;width:208px;height:24px;background:#ff12ff;justify-content:center;padding-right:1px;"><span></span></div>
<div class="fz" style="left:0;top:90.500px;width:1846px;height:5.300px;background:#c7c7c7"></div>
<div class="fz" style="left:46px;top:1px;width:5px;height:26px;background:#c7c7c7"></div>
<div class="fz" style="left:50.700px;top:26px;width:122.600px;height:42.500px;border:2px solid #0b57d0;border-left-width:1.500px;border-right-width:1.500px"></div>
<div class="fz" style="left:168px;top:62px;width:11px;height:11px;border-radius:50%;background:#0b57d0;border:1px solid #fff"></div>
</div><!-- TOP -->
<div id="top" class="abs" style="left:0;top:0;width:1920px;height:155px">
<svg style="left:23px;top:17px" width="29" height="38" viewBox="0 0 29 38"><path d="M3.300 .100H18.700L28.300 9.500V34.900a3 3 0 0 1-3 3H3.300a3 3 0 0 1-3-3V3.100a3 3 0 0 1 3-3z" fill="#00ac47"/><path d="M18.700 .100L28.300 9.500H18.700z" fill="#00832d"/><path d="M5 15H23.200V27.900H5zM7.100 16.800V20H13.300V16.800zM15.100 16.800V20H21.300V16.800zM7.100 22.300V25.600H13.300V22.300zM15.100 22.300V25.600H21.300V22.300z" fill="#fff" fill-rule="evenodd"/></svg>
<div class="tx" style="left:68px;top:12.3px;line-height:24px;font-size:19.5px;color:#1f1f1f;font-weight:normal;letter-spacing:0.08px;-webkit-text-stroke:.2px #1f1f1f;">Junior Sheet Zheng Jing</div>
<svg style="left:300.5px;top:15.5px" width="21" height="21" viewBox="0 0 24 24" ><path d="M22 9.240l-7.190-.620L12 2 9.190 8.630 2 9.240l5.460 4.730L5.820 21 12 17.270 18.180 21l-1.630-7.030L22 9.240zM12 15.400l-3.760 2.270 1-4.280-3.320-2.880 4.380-.380L12 6.100l1.710 4.040 4.380.380-3.320 2.880 1 4.280L12 15.400z" fill="#444746" /></svg>
<svg style="left:336.0px;top:16.0px" width="20" height="20" viewBox="0 0 24 24" ><path d="M20 6h-8l-2-2H4c-1.100 0-1.990.900-1.990 2L2 18c0 1.100.900 2 2 2h16c1.100 0 2-.900 2-2V8c0-1.100-.900-2-2-2zm0 12H4V6h5.170l2 2H20v10zm-7.500-1.500l4-3.500-4-3.500v2.500H8v2h4.500v2.500z" fill="#444746" /></svg>
<svg style="left:371.0px;top:16.0px" width="20" height="20" viewBox="0 0 24 24" ><path d="M19.350 10.040C18.670 6.590 15.640 4 12 4 9.110 4 6.600 5.640 5.350 8.040 2.340 8.360 0 10.910 0 14c0 3.310 2.690 6 6 6h13c2.760 0 5-2.240 5-5 0-2.640-2.050-4.780-4.650-4.960zM19 18H6c-2.210 0-4-1.790-4-4 0-2.050 1.530-3.760 3.560-3.970l1.070-.110.500-.950C8.080 7.140 9.940 6 12 6c2.620 0 4.880 1.860 5.390 4.430l.300 1.500 1.530.110c1.560.100 2.780 1.410 2.780 2.960 0 1.650-1.350 3-3 3zm-9-3.820l-2.090-2.090L6.500 13.500 10 17l6.010-6.010-1.410-1.410z" fill="#444746" /></svg>
<div class="tx" style="left:68px;top:38.7px;line-height:24px;font-size:15px;color:#1f1f1f;font-weight:normal;letter-spacing:0.33px;-webkit-text-stroke:.2px #1f1f1f;">File</div>
<div class="tx" style="left:110px;top:38.7px;line-height:24px;font-size:15px;color:#1f1f1f;font-weight:normal;letter-spacing:0.33px;-webkit-text-stroke:.2px #1f1f1f;">Edit</div>
<div class="tx" style="left:155px;top:38.7px;line-height:24px;font-size:15px;color:#1f1f1f;font-weight:normal;letter-spacing:0.33px;-webkit-text-stroke:.2px #1f1f1f;">View</div>
<div class="tx" style="left:206px;top:38.7px;line-height:24px;font-size:15px;color:#1f1f1f;font-weight:normal;letter-spacing:0.33px;-webkit-text-stroke:.2px #1f1f1f;">Insert</div>
<div class="tx" style="left:265px;top:38.7px;line-height:24px;font-size:15px;color:#1f1f1f;font-weight:normal;letter-spacing:0.33px;-webkit-text-stroke:.2px #1f1f1f;">Format</div>
<div class="tx" style="left:333px;top:38.7px;line-height:24px;font-size:15px;color:#1f1f1f;font-weight:normal;letter-spacing:0.33px;-webkit-text-stroke:.2px #1f1f1f;">Data</div>
<div class="tx" style="left:385px;top:38.7px;line-height:24px;font-size:15px;color:#1f1f1f;font-weight:normal;letter-spacing:0.33px;-webkit-text-stroke:.2px #1f1f1f;">Tools</div>
<div class="tx" style="left:440px;top:38.7px;line-height:24px;font-size:15px;color:#1f1f1f;font-weight:normal;letter-spacing:0.33px;-webkit-text-stroke:.2px #1f1f1f;">Gemini</div>
<div class="tx" style="left:507px;top:38.7px;line-height:24px;font-size:15px;color:#1f1f1f;font-weight:normal;letter-spacing:0.33px;-webkit-text-stroke:.2px #1f1f1f;">Extensions</div>
<div class="tx" style="left:601px;top:38.7px;line-height:24px;font-size:15px;color:#1f1f1f;font-weight:normal;letter-spacing:0.33px;-webkit-text-stroke:.2px #1f1f1f;">Help</div>
<svg style="left:1477.0px;top:20.0px" width="26" height="26" viewBox="0 0 24 24" ><path d="M5.200 12.500a8.300 8.300 0 1 1 2.600 5.600" fill="none" stroke="#444746" stroke-width="1.900"/><path d="M1.600 9.300l3.600 3.700 3.700-3.700" fill="none" stroke="#444746" stroke-width="1.900"/><path d="M13.200 7.500v4.800l3.400 2.400" fill="none" stroke="#444746" stroke-width="1.900"/></svg>
<svg style="left:1531.5px;top:20.5px" width="25" height="25" viewBox="0 0 24 24" ><path d="M21.990 4c0-1.100-.890-2-1.990-2H4c-1.100 0-2 .900-2 2v12c0 1.100.900 2 2 2h14l4 4-.010-18zM20 4v13.170L18.830 16H4V4h16zM6 12h12v2H6zm0-3h12v2H6zm0-3h12v2H6z" fill="#444746" /></svg>
<svg style="left:1590.0px;top:20.0px" width="26" height="26" viewBox="0 0 24 24" ><path d="M4.500 6.500h10.500a1.800 1.800 0 0 1 1.800 1.800v7.400a1.800 1.800 0 0 1-1.800 1.800H4.500a1.800 1.800 0 0 1-1.800-1.800V8.300a1.800 1.800 0 0 1 1.800-1.800z" fill="none" stroke="#444746" stroke-width="1.900"/><path d="M16.500 11l5.300-4v10l-5.300-4z" fill="#444746"/></svg>
<svg style="left:1626px;top:30px" width="10" height="6" viewBox="0 0 10 6"><path d="M0.5 0.5h9L5 5.5z" fill="#444746"/></svg>
<div style="left:1660px;top:11px;width:137px;height:44px;border-radius:22px;background:#c2e7ff"></div>
<div style="left:1759px;top:11px;width:1px;height:44px;background:#f9fbfd"></div>
<svg style="left:1679.0px;top:23.0px" width="20" height="20" viewBox="0 0 24 24" ><path d="M9 13.750c-2.340 0-7 1.170-7 3.500V19h14v-1.750c0-2.330-4.660-3.500-7-3.500zM4.340 17c.840-.580 2.870-1.250 4.660-1.250s3.820.670 4.660 1.250H4.340zM9 12c1.930 0 3.500-1.570 3.500-3.500S10.930 5 9 5 5.500 6.570 5.500 8.500 7.070 12 9 12zm0-5c.830 0 1.500.670 1.500 1.500S9.830 10 9 10s-1.500-.670-1.500-1.500S8.170 7 9 7zm7.040 6.810c1.160.840 1.960 1.960 1.960 3.440V19h4v-1.750c0-2.020-3.500-3.170-5.960-3.440zM15 12c1.930 0 3.500-1.570 3.500-3.500S16.930 5 15 5c-.540 0-1.040.130-1.500.350.630.890 1 1.980 1 3.150s-.370 2.260-1 3.150c.460.220.960.350 1.500.350z" fill="#001d35" /></svg>
<div class="tx" style="left:1707.5px;top:21px;line-height:24px;font-size:15.5px;color:#001d35;font-weight:normal;letter-spacing:0.55px;-webkit-text-stroke:.55px #001d35;">Share</div>
<svg style="left:1773px;top:30px" width="10" height="6" viewBox="0 0 10 6"><path d="M0.5 0.5h9L5 5.5z" fill="#001d35"/></svg>
<svg style="left:1815.0px;top:20.0px" width="26" height="26" viewBox="0 0 24 24" ><path d="M12 1.500c.6 5.800 4.700 9.900 10.500 10.500-5.800.6-9.900 4.700-10.500 10.500-.6-5.800-4.700-9.900-10.500-10.500C7.300 11.400 11.400 7.300 12 1.500z" fill="#3c4043" /></svg>
<svg style="left:1852px;top:6px" width="56" height="54" viewBox="0 0 56 54">
<defs><clipPath id="avc"><circle cx="28" cy="27" r="18.500"/></clipPath></defs>
<path d="M42.32 11.64A21 21 0 0 1 42.32 42.36" fill="none" stroke="#0b66e8" stroke-width="2.100"/><path d="M42.32 42.36A21 21 0 0 1 9.46 36.86" fill="none" stroke="#0a9f3c" stroke-width="2.100"/><path d="M9.46 36.86A21 21 0 0 1 9.29 17.47" fill="none" stroke="#fbab12" stroke-width="2.100"/><path d="M9.29 17.47A21 21 0 0 1 42.32 11.64" fill="none" stroke="#f0150f" stroke-width="2.100"/>
<g clip-path="url(#avc)"><rect x="8" y="7" width="40" height="40" fill="#f4f0ea"/>
<rect x="8" y="7" width="40" height="12" fill="#c7a78f"/>
<rect x="8" y="18.300" width="40" height="1.500" fill="#e3d3c6"/>
<path d="M33 30l10.500 3.500c1.500 1.500 2 5 2 12H29z" fill="#3272a2"/>
<path d="M18 40c3-4 6-6 8-7l5 13H16z" fill="#0f2c50"/>
<path d="M12 35c2-3 6-4 9-3l1 6-4 6c-3-2-5-5-6-9z" fill="#5f7891"/>
<path d="M25.500 30.500l7-2.500 1.500 3-1 14h-3z" fill="#f1f0f2"/>
<path d="M27.500 31l2.500-.3 1.800 9-1.300 4.500-1.500-1.500z" fill="#66708f"/>
<ellipse cx="25.800" cy="23.300" rx="5.600" ry="6.600" fill="#e9bd9f"/>
<path d="M19.200 21c-.5-5 3-8 7.500-7.800 4 .3 6.300 3 6.300 7 0 3-.3 5.500-.8 6.500-1-.5-1.500-2-1.500-4-1.500-2-3-4-4-5.500-2.500.500-5.500 1.500-7.500 3.800z" fill="#2a1c17"/>
<path d="M21.500 28c1.500-1.500 3.500-1 4 1l-.5 6-2.500 3.500c-1.500-1-1.800-3-1.500-5z" fill="#e5b59a"/>
<path d="M18 28.500c1.500-1.500 4-2 5.500-.500l-.5 2.500c-2 .5-4 0-5-2z" fill="#f3d3bd"/>
<ellipse cx="24.200" cy="25.800" rx="1" ry="1.300" fill="#1c1412"/>
<rect x="35.500" y="39" width="4.500" height="1.200" fill="#dfe6ee"/>
</g></svg>
<div style="left:18px;top:71px;width:1822px;height:44px;border-radius:22px;background:#eff2f8"></div>
<div style="left:27px;top:78px;width:110px;height:31px;border-radius:16px;background:#fff"></div>
<svg style="left:37.0px;top:84.5px" width="20" height="20" viewBox="0 0 24 24" ><path d="M15.500 14h-.790l-.280-.270C15.410 12.590 16 11.110 16 9.500 16 5.910 13.090 3 9.500 3S3 5.910 3 9.500 5.910 16 9.500 16c1.610 0 3.090-.590 4.230-1.570l.270.280v.790l5 4.990L20.490 19l-4.990-5zm-6 0C7.010 14 5 11.990 5 9.500S7.010 5 9.500 5 14 7.010 14 9.500 11.990 14 9.500 14z" fill="#444746" /></svg>
<div class="tx" style="left:67px;top:81px;line-height:24px;font-size:15px;color:#444746;font-weight:normal;letter-spacing:0.45px;-webkit-text-stroke:.2px #444746;">Menus</div>
<svg style="left:146.35px;top:84.05px" width="18.5" height="18.5" viewBox="0 0 20 20" ><path d="M7.500 15.500h6a3.700 3.700 0 0 0 0-7.400H5M8.300 4.800L5 8.100l3.300 3.300" fill="none" stroke="#444746" stroke-width="1.700"/></svg>
<svg style="left:182.35px;top:84.05px" width="18.5" height="18.5" viewBox="0 0 20 20" ><path d="M12.500 15.500h-6a3.700 3.700 0 0 1 0-7.400H15M11.700 4.800L15 8.100l-3.300 3.300" fill="none" stroke="#444746" stroke-width="1.700"/></svg>
<svg style="left:216.0px;top:84.0px" width="20" height="20" viewBox="0 0 24 24" ><path d="M19 8h-1V3H6v5H5c-1.660 0-3 1.340-3 3v6h4v4h12v-4h4v-6c0-1.660-1.340-3-3-3zM8 5h8v3H8V5zm8 12v2H8v-4h8v2zm2-2v-2H6v2H4v-4c0-.550.450-1 1-1h14c.550 0 1 .450 1 1v4h-2z" fill="#444746" /><circle cx="18" cy="11.500" r="1" fill="#444746"/></svg>
<svg style="left:250.8px;top:84.4px" width="20" height="20" viewBox="0 0 20 20" ><g transform="translate(20,0) scale(-1,1)"><path d="M4.300 1.800h11.400v4.600H4.300z" fill="none" stroke="#444746" stroke-width="1.700" stroke-linejoin="round"/><path d="M15.700 4.100h2.400v4.900h-7.400v3" fill="none" stroke="#444746" stroke-width="1.700"/><rect x="8.900" y="12" width="3.600" height="6.300" rx=".8" fill="none" stroke="#444746" stroke-width="1.700"/></g></svg>
<div class="tx" style="left:288.5px;top:83px;line-height:24px;font-size:15px;color:#444746;font-weight:normal;letter-spacing:0.35px;-webkit-text-stroke:.25px #444746;">100%</div>
<svg style="left:342px;top:91px" width="10" height="6" viewBox="0 0 10 6"><path d="M0.5 0.5h9L5 5.5z" fill="#444746"/></svg>
<div style="left:366px;top:83px;width:1px;height:21px;background:#c7c7c7"></div>
<div class="tx" style="left:383px;top:81px;line-height:24px;font-size:15px;color:#444746;font-weight:normal;letter-spacing:0px;">$</div>
<div class="tx" style="left:416px;top:81px;line-height:24px;font-size:15px;color:#444746;font-weight:normal;letter-spacing:0px;">%</div>
<div class="tx" style="left:448px;top:78px;font-size:14px;line-height:24px;font-weight:normal;letter-spacing:.3px;color:#444746">.0</div>
<svg style="left:457px;top:97px" width="10" height="7" viewBox="0 0 10 7"><path d="M9.500 3.500H2M4.200 1L1.500 3.500 4.200 6" fill="none" stroke="#444746" stroke-width="1.300"/></svg>
<div class="tx" style="left:483px;top:78px;font-size:14px;line-height:24px;font-weight:normal;letter-spacing:-.3px;color:#444746">.00</div>
<svg style="left:493px;top:97px" width="10" height="7" viewBox="0 0 10 7"><path d="M.500 3.500H8M5.800 1l2.700 2.500L5.800 6" fill="none" stroke="#444746" stroke-width="1.300"/></svg>
<div class="tx" style="left:518px;top:81px;line-height:24px;font-size:13px;color:#444746;font-weight:normal;letter-spacing:-0.3px;">123</div>
<div style="left:551px;top:83px;width:1px;height:21px;background:#c7c7c7"></div>
<div class="tx" style="left:569px;top:81px;line-height:24px;font-size:15.5px;color:#444746;font-weight:normal;letter-spacing:0.35px;-webkit-text-stroke:.2px #444746;">Arial</div>
<svg style="left:641px;top:90px" width="10" height="6" viewBox="0 0 10 6"><path d="M0.5 0.5h9L5 5.5z" fill="#444746"/></svg>
<div style="left:667px;top:83px;width:1px;height:21px;background:#c7c7c7"></div>
<div style="left:679.500px;top:93.300px;width:11px;height:1.400px;background:#444746"></div>
<div style="left:702px;top:80px;width:37px;height:26px;border:1px solid #444746;border-radius:4px"></div>
<div class="tx" style="left:711.5px;top:81.5px;line-height:24px;font-size:15px;color:#1f1f1f;font-weight:normal;letter-spacing:0.3px;">10</div>
<div style="left:749.500px;top:93.300px;width:11px;height:1.400px;background:#444746"></div><div style="left:754.300px;top:88.500px;width:1.400px;height:11px;background:#444746"></div>
<div style="left:774px;top:83px;width:1px;height:21px;background:#c7c7c7"></div>
<div class="tx" style="left:790px;top:82px;line-height:24px;font-size:15px;color:#444746;font-weight:bold;letter-spacing:0px;">B</div>
<div class="tx" style="left:825px;top:82px;font-size:17px;line-height:24px;font-weight:bold;font-style:italic;color:#444746;font-family:'Liberation Serif',serif">I</div>
<div class="tx" style="left:860px;top:81px;font-size:14px;line-height:24px;color:#444746;font-weight:bold">S</div><div style="left:856px;top:93px;width:18px;height:1.600px;background:#444746"></div><div style="left:856px;top:91.500px;width:18px;height:1.500px;background:#edf2fa"></div><div style="left:856px;top:94.600px;width:18px;height:1.500px;background:#edf2fa"></div>
<div class="tx" style="left:896px;top:78px;line-height:24px;font-size:14.5px;color:#444746;font-weight:normal;letter-spacing:0px;">A</div>
<div style="left:889px;top:100px;width:25px;height:4px;background:#000"></div>
<div style="left:923px;top:83px;width:1px;height:21px;background:#c7c7c7"></div>
<svg style="left:935.0px;top:79.0px" width="21" height="21" viewBox="0 0 24 24" ><path d="M16.560 8.940L7.620 0 6.210 1.410l2.380 2.380-5.150 5.150c-.590.590-.590 1.540 0 2.120l5.500 5.500c.290.290.680.440 1.060.440s.770-.150 1.060-.440l5.500-5.500c.590-.580.590-1.530 0-2.120zM5.210 10L10 5.210 14.790 10H5.210zM19 11.500s-2 2.170-2 3.500c0 1.100.900 2 2 2s2-.900 2-2c0-1.330-2-3.500-2-3.500z" fill="#202124" /></svg>
<div style="left:934px;top:100px;width:24px;height:4px;background:#ffff3d"></div>
<svg style="left:973.0px;top:84.0px" width="20" height="20" viewBox="0 0 24 24" ><path d="M3 3v18h18V3H3zm8 16H5v-6h6v6zm0-8H5V5h6v6zm8 8h-6v-6h6v6zm0-8h-6V5h6v6z" fill="#444746" /></svg>
<svg style="left:1009.0px;top:84.0px" width="20" height="20" viewBox="0 0 24 24" ><path d="M3 5h6v2H5v3H3V5zm12 0h6v5h-2V7h-4V5zM3 14h2v3h4v2H3v-5zm16 0h2v5h-6v-2h4v-3zM6 11h4V9l3 3-3 3v-2H6v-2zm12 0v2h-2v-2h2z" fill="#b4b8bd" /></svg>
<svg style="left:1036px;top:91px" width="10" height="6" viewBox="0 0 10 6"><path d="M0.5 0.5h9L5 5.5z" fill="#b4b8bd"/></svg>
<div style="left:1053px;top:83px;width:1px;height:21px;background:#c7c7c7"></div>
<svg style="left:1062.0px;top:84.0px" width="20" height="20" viewBox="0 0 24 24" ><path d="M7 15v2h10v-2H7zm-4 6h18v-2H3v2zm0-8h18v-2H3v2zm4-6v2h10V7H7zM3 3v2h18V3H3z" fill="#444746" /></svg>
<svg style="left:1086px;top:91px" width="10" height="6" viewBox="0 0 10 6"><path d="M0.5 0.5h9L5 5.5z" fill="#444746"/></svg>
<svg style="left:1107.0px;top:84.0px" width="20" height="20" viewBox="0 0 24 24" ><path d="M8 19h3v4h2v-4h3l-4-4-4 4zm8-14h-3V1h-2v4H8l4 4 4-4zM4 11v2h16v-2H4z" fill="#444746" /></svg>
<svg style="left:1131px;top:91px" width="10" height="6" viewBox="0 0 10 6"><path d="M0.5 0.5h9L5 5.5z" fill="#444746"/></svg>
<svg style="left:1151.0px;top:84.0px" width="20" height="20" viewBox="0 0 24 24" ><path d="M4 4v16M20 4v16" stroke="#444746" stroke-width="1.800" fill="none"/><path d="M7 9.500h6.500a3 3 0 0 1 0 6H10" stroke="#444746" stroke-width="1.800" fill="none"/><path d="M12.500 12.500l-3 3 3 3z" fill="#444746"/></svg>
<svg style="left:1176px;top:91px" width="10" height="6" viewBox="0 0 10 6"><path d="M0.5 0.5h9L5 5.5z" fill="#444746"/></svg>
<div class="tx" style="left:1201px;top:78px;font-size:14px;line-height:24px;color:#444746">A</div>
<svg style="left:1199px;top:98px" width="18" height="7" viewBox="0 0 18 7"><path d="M1 3.500h13M11.500 1l3 2.500-3 2.500" fill="none" stroke="#444746" stroke-width="1.500"/></svg>
<svg style="left:1222px;top:91px" width="10" height="6" viewBox="0 0 10 6"><path d="M0.5 0.5h9L5 5.5z" fill="#444746"/></svg>
<div style="left:1240px;top:83px;width:1px;height:21px;background:#c7c7c7"></div>
<svg style="left:1250.0px;top:83.0px" width="22" height="22" viewBox="0 0 24 24" ><path d="M3.900 12c0-1.710 1.390-3.100 3.100-3.100h4V7H7c-2.760 0-5 2.240-5 5s2.240 5 5 5h4v-1.900H7c-1.710 0-3.100-1.390-3.100-3.100zM8 13h8v-2H8v2zm9-6h-4v1.900h4c1.710 0 3.100 1.390 3.100 3.100s-1.390 3.100-3.100 3.100h-4V17h4c2.760 0 5-2.240 5-5s-2.240-5-5-5z" fill="#444746" /></svg>
<svg style="left:1286.5px;top:83.5px" width="21" height="21" viewBox="0 0 24 24" ><path d="M20 2H4c-1.100 0-2 .900-2 2v18l4-4h14c1.100 0 2-.900 2-2V4c0-1.100-.900-2-2-2zm0 14H5.170L4 17.170V4h16v12zM11 14h2v-3h3V9h-3V6h-2v3H8v2h3v3z" fill="#444746" /></svg>
<svg style="left:1321.0px;top:84.0px" width="20" height="20" viewBox="0 0 24 24" ><path d="M19 3H5c-1.100 0-2 .900-2 2v14c0 1.100.900 2 2 2h14c1.100 0 2-.900 2-2V5c0-1.100-.900-2-2-2zm0 16H5V5h14v14zM7 10h2v7H7zm4-3h2v10h-2zm4 6h2v4h-2z" fill="#444746" /></svg>
<svg style="left:1356.0px;top:84.0px" width="20" height="20" viewBox="0 0 24 24" ><path d="M7 6h10l-5.010 6.300L7 6zm-2.750-.390C6.270 8.200 10 13 10 13v6c0 .550.450 1 1 1h2c.550 0 1-.450 1-1v-6s3.720-4.800 5.740-7.390c.510-.660.040-1.610-.790-1.610H5.040c-.830 0-1.300.950-.790 1.610z" fill="#444746" /></svg>
<svg style="left:1388.5px;top:83.5px" width="21" height="21" viewBox="0 0 24 24" ><path d="M7 7h14v14H7zM7 11.500h14M7 16h14M11.700 11.500V21M16.300 11.500V21" fill="none" stroke="#444746" stroke-width="1.800"/><path d="M17 3.500H3.500V17" fill="none" stroke="#444746" stroke-width="1.800"/></svg>
<svg style="left:1414px;top:91px" width="10" height="6" viewBox="0 0 10 6"><path d="M0.5 0.5h9L5 5.5z" fill="#444746"/></svg>
<div class="tx" style="left:1441.500px;top:82px;font-size:16px;line-height:24px;font-weight:bold;color:#444746">Σ</div>
<svg style="left:1802px;top:88px" width="14" height="10" viewBox="0 0 14 10"><path d="M1.500 8L7 2.500 12.500 8" fill="none" stroke="#444746" stroke-width="1.800"/></svg>
<div style="left:0;top:124px;width:1840px;height:31px;background:#fff"></div>
<div class="tx" style="left:16px;top:128px;line-height:24px;font-size:13.3px;color:#1f1f1f;font-weight:normal;letter-spacing:0px;">A1</div>
<svg style="left:94px;top:137px" width="10" height="6" viewBox="0 0 10 6"><path d="M0.5 0.5h9L5 5.5z" fill="#444746"/></svg>
<div class="tx" style="left:130px;top:127px;font-size:17px;line-height:24px;color:#8a9096;font-style:italic;font-weight:bold;font-family:'Liberation Serif',serif;letter-spacing:-.5px">fx</div>
<div style="left:1662px;top:127px;width:178px;height:26px;border-radius:13px;background:#eef1f7"></div>
<svg style="left:1674.5px;top:132.5px" width="15" height="15" viewBox="0 0 24 24" ><path d="M12 1.500c.6 5.800 4.700 9.900 10.500 10.500-5.800.6-9.900 4.700-10.500 10.500-.6-5.800-4.700-9.900-10.500-10.500C7.300 11.400 11.400 7.300 12 1.500z" fill="#1f1f1f" /></svg>
<div class="tx" style="left:1695px;top:128px;line-height:24px;font-size:14.3px;color:#1f1f1f;font-weight:normal;letter-spacing:0px;">Summarize this data</div>
</div><!-- SIDE + SCROLLBARS -->
<div id="side" class="abs" style="left:0;top:0;width:1920px;height:1080px">
<div style="left:1846px;top:156px;width:12px;height:870px;background:#fff"></div>
<div style="left:1846px;top:156px;width:12px;height:90px;background:#f8f8f8"></div>
<div style="left:1846px;top:246px;width:12px;height:4.500px;background:#dde3ec"></div>
<div style="left:1846px;top:155px;width:12px;height:1px;background:#d5d5d5"></div>
<div style="left:1845px;top:156px;width:1px;height:884px;background:#d0d0d0"></div>
<div style="left:1848px;top:393px;width:9px;height:49px;border-radius:5px;background:#dadce0"></div>
<div style="left:1846px;top:991px;width:12px;height:35px;background:#f8f9fa;border-top:1px solid #d0d0d0"></div>
<div style="left:1846px;top:1008px;width:12px;height:1px;background:#d0d0d0"></div>
<svg style="left:1849px;top:997px" width="7" height="5" viewBox="0 0 7 5"><path d="M3.500 .500L6.500 4.200H.500z" fill="#9e9e9e"/></svg>
<svg style="left:1849px;top:1015px" width="7" height="5" viewBox="0 0 7 5"><path d="M3.500 4.500L6.500 .800H.500z" fill="#9e9e9e"/></svg>
<div style="left:0;top:1025px;width:1858px;height:15px;background:#fff;border-top:1px solid #d0d0d0;border-bottom:1px solid #c8c8c8"></div>
<div style="left:0;top:1026px;width:51px;height:13px;background:#f8f9fa;border-right:1px solid #d0d0d0"></div>
<div style="left:52px;top:1027px;width:1433px;height:10px;border-radius:5px;background:#dadce0"></div>
<div style="left:1812px;top:1026px;width:34px;height:13px;background:#f8f9fa;border-left:1px solid #d0d0d0;border-right:1px solid #c0c0c0"></div>
<div style="left:1829px;top:1026px;width:1px;height:13px;background:#d0d0d0"></div>
<svg style="left:1818px;top:1029px" width="5" height="7" viewBox="0 0 5 7"><path d="M.500 3.500L4.200 .500v6z" fill="#9e9e9e"/></svg>
<svg style="left:1836px;top:1029px" width="5" height="7" viewBox="0 0 5 7"><path d="M4.500 3.500L.800 .500v6z" fill="#9e9e9e"/></svg>
<div style="left:1846px;top:1026px;width:12px;height:13px;background:#f8f9fa"></div>
<div style="left:1858px;top:62px;width:62px;height:1018px;background:#f9fbfd"></div>
<svg style="left:1872px;top:80px" width="34" height="32" viewBox="0 0 34 32"><path d="M8.400 5.800H22.500V9.900H10.700V22.100H6.400V7.800A2 2 0 0 1 8.400 5.800z" fill="#2b83f0"/><path d="M22.500 5.800H24.700A2.300 2.300 0 0 1 27 8.100V9.900H22.500z" fill="#0b64d0"/><rect x="22.500" y="9.900" width="4.500" height="12.200" fill="#fdba2f"/><path d="M22.500 22.100H27L22.500 26.100z" fill="#ee4335"/><rect x="10.700" y="22.100" width="11.800" height="4" fill="#0aa85a"/><path d="M6.400 22.100H10.700V26.100H8.400A2 2 0 0 1 6.400 24.100z" fill="#0a8040"/><rect x="10.700" y="9.900" width="11.800" height="12.200" fill="#fff"/><text x="16.600" y="19.600" text-anchor="middle" style="font-family:&quot;Liberation Sans&quot;,sans-serif;font-size:9.800px;font-weight:bold;letter-spacing:-.5px;text-rendering:geometricPrecision" fill="#4a8df5">31</text></svg>
<svg style="left:1872px;top:141px" width="34" height="32" viewBox="0 0 34 32"><defs><clipPath id="kpc"><rect x="0" y="0" width="34" height="18.900"/></clipPath></defs><rect x="6.400" y="5.500" width="21.100" height="21" rx="2.600" fill="#fdba30"/><circle cx="17" cy="14.800" r="4.450" fill="#fff" clip-path="url(#kpc)"/><rect x="14.800" y="20.100" width="4.400" height="2" rx=".3" fill="#fff"/></svg>
<svg style="left:1872px;top:203px" width="34" height="32" viewBox="0 0 34 32"><circle cx="17" cy="15.850" r="7.700" fill="none" stroke="#0580f5" stroke-width="3.050"/><path d="M14 14.400L17 17.500 25.300 9" fill="none" stroke="#0580f5" stroke-width="3.700" stroke-linejoin="round"/><path d="M22.300 12.050l1.900-1.950" fill="none" stroke="#0462d4" stroke-width="3.700"/></svg>
<svg style="left:1872px;top:264px" width="34" height="32" viewBox="0 0 34 32"><circle cx="17" cy="10.400" r="3.700" fill="#0057c8"/><path d="M9 23.900V21.500C9 18 12 15.250 16 15.250H20.400a4.820 4.820 0 0 1 0 9.650H10a1 1 0 0 1-1-1z" fill="#4c8df6"/><path d="M9 23.900V21.500C9 18.500 11 16.200 13.500 15.600V24.900H10a1 1 0 0 1-1-1z" fill="#8fb3f9"/><path d="M11.850 23.400V19.500C11.850 17 13.500 15.250 16 15.250H17.400a4.820 4.820 0 0 1 0 9.650H13.350a1.500 1.500 0 0 1-1.500-1.500z" fill="#0057c8"/></svg>
<div style="left:1872px;top:326.400px;width:34px;height:32px;background:conic-gradient(from 0deg at 17px 13.600px,#1a73e8 0deg,#0b8ed6 40deg,#00a88f 75deg,#00b560 105deg,#00c064 195deg,#9bcb3c 218deg,#f6cf2e 236deg,#ff8a1e 256deg,#ff3b3b 282deg,#f0507a 306deg,#a070e0 330deg,#4a7ff5 350deg,#1a73e8 360deg);clip-path:path(evenodd,'M17 5.450A8.150 8.150 0 0 1 25.150 13.600C25.150 17.500 20.500 21 17.700 25.700Q17 26.600 16.300 25.700C13.500 21 8.850 17.500 8.850 13.600A8.150 8.150 0 0 1 17 5.450zM17 9.450a4.150 4.150 0 1 0 .010 0z')"></div>
<div style="left:1878px;top:390px;width:22px;height:1px;background:#dadce0"></div>
<svg style="left:1872px;top:424px" width="34" height="32" viewBox="0 0 34 32"><defs><linearGradient id="swb" x1="1" y1="0" x2="0" y2="1"><stop offset="0" stop-color="#0bb0c8"/><stop offset=".5" stop-color="#0a8de0"/><stop offset="1" stop-color="#0a62f5"/></linearGradient></defs><path d="M27.500 13C26 11.500 23.500 11 22.500 11.300 20 12 15 14.500 13.300 16 11.500 17.500 10.300 19.500 10.400 20.700 10.600 22.500 12 24 13 24.600 14 23.500 18 20.500 20.700 19 23 17.800 26.500 15.500 27.500 13z" fill="url(#swb)"/><path d="M6.100 10.400C8 9 11 8 12.700 7.400 15 6.600 17.500 6 19.300 5.900 21.500 5.800 23.200 6.200 24.300 6.800 26 7.800 27 9 27.300 9.800 27.700 10.800 27.900 11.800 27.800 12.600 27 12 26.500 11.800 26.100 11.600 25 11 23.500 10.800 22.500 11 21 11.300 19 12 17.800 12.400 16 13 14.500 13.700 13.300 14.200 12 14.800 10.800 15.400 9.800 16z" fill="#021c20"/><path d="M13 24.600C13.400 25.200 13.800 25.500 14.200 25.500 15.500 25.500 16.800 25 17.800 24.600 19 24.100 20 23.500 20.700 23.100 22 22.500 24 22.300 25.200 22.500 25.300 21.800 25 21 24.600 20.400 24.200 19.800 23.300 19.300 22.500 19.300 21.500 19.300 20.300 19.700 19.300 20.100 18 20.700 16.500 21.500 15.400 22.200 14.500 22.800 13.500 23.800 13 24.600z" fill="#020f0c"/><path d="M20.400 23.400C20.100 24 20 24.500 20.100 24.900 20.300 25.500 20.800 25.900 21.300 25.900 22.200 25.800 23 25.400 23.700 24.900 24.600 24.300 25.300 23.500 25.500 22.800 25.500 22.400 25.300 22.100 24.900 21.900 24.200 21.800 23.200 22.100 22.500 22.500 21.600 22.800 20.900 23.100 20.400 23.400z" fill="#0a7be8"/></svg>
<div style="left:1880px;top:500px;width:18px;height:2px;background:#1f1f1f"></div><div style="left:1888px;top:492px;width:2px;height:18px;background:#1f1f1f"></div>
<svg style="left:1885px;top:1043px" width="9" height="12.600" viewBox="0 0 10 14"><path d="M2 1.500L7.500 7 2 12.500" fill="none" stroke="#444746" stroke-width="1.800"/></svg>
</div>
<!-- BOTTOM TABS -->
<div id="bot" class="abs" style="left:0;top:1040px;width:1858px;height:40px;background:#f9fbfd">
<div style="left:61.500px;top:19.300px;width:11px;height:1.500px;background:#444746"></div><div style="left:66.250px;top:14.500px;width:1.500px;height:11px;background:#444746"></div>
<div style="left:103px;top:15px;width:16px;height:1.800px;background:#444746"></div><div style="left:103px;top:19.200px;width:16px;height:1.800px;background:#444746"></div><div style="left:103px;top:23.400px;width:16px;height:1.800px;background:#444746"></div>
<svg style="left:146px;top:11px" width="19" height="19" viewBox="0 0 19 19"><path d="M1.500 2.500h6v5h-6zM1.500 11.500h6v6h-6zM10.500 11.500h6v6h-6z" fill="none" stroke="#444746" stroke-width="1.700"/><path d="M13.500 .500c.3 2.400 1.600 3.700 4 4-2.400.3-3.700 1.600-4 4-.3-2.400-1.600-3.700-4-4 2.400-.3 3.700-1.600 4-4z" fill="#444746"/></svg>
<div class="tab" style="left:205px;top:8.5px">FAQ</div>
<svg style="left:247px;top:17px" width="10" height="6" viewBox="0 0 10 6"><path d="M0.500 0.500h9L5 5.500z" fill="#444746"/></svg>
<div class="tab" style="left:284px;top:8.5px">Info</div>
<svg style="left:325px;top:17px" width="10" height="6" viewBox="0 0 10 6"><path d="M0.500 0.500h9L5 5.500z" fill="#444746"/></svg>
<div class="tab" style="left:362px;top:8.5px">CP4 Chapter 1</div>
<svg style="left:481px;top:17px" width="10" height="6" viewBox="0 0 10 6"><path d="M0.500 0.500h9L5 5.500z" fill="#444746"/></svg>
<div class="tab" style="left:517px;top:8.5px">CP4 Chapter 2</div>
<svg style="left:639px;top:17px" width="10" height="6" viewBox="0 0 10 6"><path d="M0.500 0.500h9L5 5.500z" fill="#444746"/></svg>
<div class="tab" style="left:676px;top:8.5px">CP4 Chapter 3</div>
<svg style="left:797px;top:17px" width="10" height="6" viewBox="0 0 10 6"><path d="M0.500 0.500h9L5 5.500z" fill="#444746"/></svg>
<div class="tab" style="left:834px;top:8.5px">CP4 Chapter 4</div>
<svg style="left:956px;top:17px" width="10" height="6" viewBox="0 0 10 6"><path d="M0.500 0.500h9L5 5.500z" fill="#444746"/></svg>
<div class="tab" style="left:993px;top:8.5px">CP4 Chapter 5</div>
<svg style="left:1115px;top:17px" width="10" height="6" viewBox="0 0 10 6"><path d="M0.500 0.500h9L5 5.500z" fill="#444746"/></svg>
<div class="tab" style="left:1152px;top:8.5px">CP4 Chapter 6</div>
<svg style="left:1273px;top:17px" width="10" height="6" viewBox="0 0 10 6"><path d="M0.500 0.500h9L5 5.500z" fill="#444746"/></svg>
<div class="tab" style="left:1311px;top:8.5px">CP4 Chapter 7</div>
<svg style="left:1431px;top:17px" width="10" height="6" viewBox="0 0 10 6"><path d="M0.500 0.500h9L5 5.500z" fill="#444746"/></svg>
<div style="left:1454px;top:0;width:161px;height:40px;background:#dfe5ef"></div>
<div class="tab act" style="left:1467px;top:8.5px">CP4 Chapter 8</div>
<svg style="left:1592px;top:17px" width="10" height="6" viewBox="0 0 10 6"><path d="M0.500 0.500h9L5 5.500z" fill="#0b57d0"/></svg>
<div class="tab" style="left:1628px;top:8.5px;width:79px;overflow:hidden">CP4 Chapter 9</div>
<div style="left:1707px;top:9px;width:1px;height:22px;background:#c7c7c7"></div>
<svg style="left:1729px;top:14px" width="8" height="12" viewBox="0 0 9 14"><path d="M7 1.500L1.800 7 7 12.500" fill="none" stroke="#c4c7c5" stroke-width="1.700"/></svg>
<svg style="left:1773px;top:14px" width="8" height="12" viewBox="0 0 9 14"><path d="M2 1.500L7.200 7 2 12.500" fill="none" stroke="#444746" stroke-width="1.700"/></svg>
</div></body></html>
